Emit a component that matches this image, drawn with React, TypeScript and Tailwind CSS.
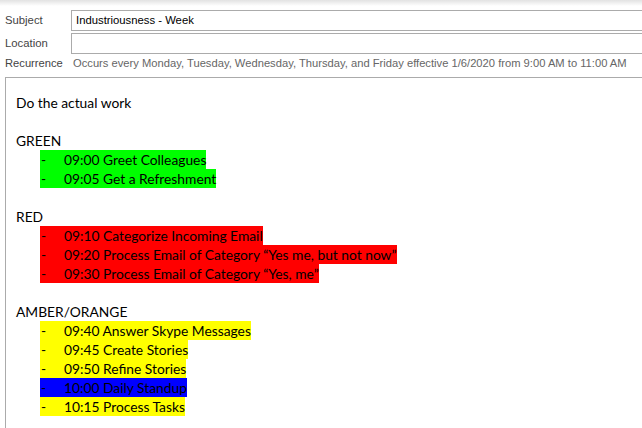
import React from "react";

type Item = { t: string; c: string };

const green: Item[] = [
  { t: "09:00 Greet Colleagues", c: "bg-[#00ff00]" },
  { t: "09:05 Get a Refreshment", c: "bg-[#00ff00]" },
];
const red: Item[] = [
  { t: "09:10 Categorize Incoming Email", c: "bg-[#ff0000]" },
  { t: "09:20 Process Email of Category \u201cYes me, but not now\u201d", c: "bg-[#ff0000]" },
  { t: "09:30 Process Email of Category \u201cYes, me\u201d", c: "bg-[#ff0000]" },
];
const amber: Item[] = [
  { t: "09:40 Answer Skype Messages", c: "bg-[#ffff00]" },
  { t: "09:45 Create Stories", c: "bg-[#ffff00]" },
  { t: "09:50 Refine Stories", c: "bg-[#ffff00]" },
  { t: "10:00 Daily Standup", c: "bg-[#0000ff]" },
  { t: "10:15 Process Tasks", c: "bg-[#ffff00]" },
];

function Line({ children }: { children?: React.ReactNode }) {
  return <div className="h-[19px] leading-[19px] whitespace-pre">{children ?? "\u00a0"}</div>;
}

function Bullet({ item }: { item: Item }) {
  return (
    <div className="h-[19px] leading-[19px] pl-[24px] flex">
      <span className={`inline-flex h-[19px] whitespace-pre ${item.c}`}>
        <span className="w-[24px] pl-[1px]">-</span>
        <span>{item.t}</span>
      </span>
    </div>
  );
}

export default function App() {
  return (
    <div className="w-[642px] h-[428px] bg-white overflow-hidden flex flex-col font-['Liberation_Sans',sans-serif]">
      <div className="h-[6px] bg-gradient-to-b from-[#e2e2e2] to-white shrink-0" />
      <div className="flex items-center h-[21px] mt-[4px] text-[11.3px]">
        <div className="w-[71px] pl-[5px] text-[#444444]">Subject</div>
        <div className="flex-1 h-[21px] border border-[#ababab] border-r-0 flex items-center pl-[4px] text-[#000000]">
          Industriousness - Week
        </div>
      </div>
      <div className="flex items-center h-[21px] mt-[2px] text-[11.3px]">
        <div className="w-[71px] pl-[5px] text-[#444444]">Location</div>
        <div className="flex-1 h-[21px] border border-[#ababab] border-r-0" />
      </div>
      <div className="flex items-center h-[16px] mt-[1px] text-[11.2px] whitespace-nowrap">
        <div className="w-[73px] pl-[5px] text-[#444444]">Recurrence</div>
        <div className="text-[#666666]">
          Occurs every Monday, Tuesday, Wednesday, Thursday, and Friday effective 1/6/2020 from 9:00 AM to 11:00 AM
        </div>
      </div>
      <div className="mt-[6px] ml-[5px] flex-1 border-l border-t border-[#ababab] pt-[15px] pl-[10px] text-[13.8px] text-black font-['Lato',sans-serif]">
        <Line>Do the actual work</Line>
        <Line />
        <Line>GREEN</Line>
        {green.map((i) => (
          <Bullet key={i.t} item={i} />
        ))}
        <Line />
        <Line>RED</Line>
        {red.map((i) => (
          <Bullet key={i.t} item={i} />
        ))}
        <Line />
        <Line>AMBER/ORANGE</Line>
        {amber.map((i) => (
          <Bullet key={i.t} item={i} />
        ))}
      </div>
    </div>
  );
}
